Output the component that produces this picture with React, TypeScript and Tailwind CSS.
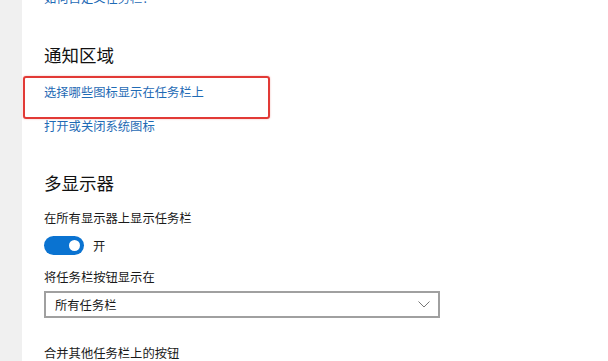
import React from "react";

export default function App() {
  return (
    <div
      className="relative flex h-[361px] w-[608px] overflow-hidden bg-white text-black"
      style={{ fontFamily: '"Noto Sans CJK SC", "Noto Sans", sans-serif' }}
    >
      <div className="h-full w-[22px] shrink-0 bg-[#f0f0f0]" />
      <div className="flex flex-col pl-[22px]">
        <div className="mt-[-10px] h-[16px] text-[12.3px] leading-[16px] text-[#1f6bb5]">如何自定义任务栏?</div>
        <div className="mt-[37px] h-[24px] text-[17.5px] leading-[24px] text-[#111]">通知区域</div>
        <div className="mt-[17px] h-[16px] text-[12.3px] leading-[16px] text-[#1f6bb5]">选择哪些图标显示在任务栏上</div>
        <div className="mt-[18px] h-[16px] text-[12.3px] leading-[16px] text-[#1f6bb5]">打开或关闭系统图标</div>
        <div className="mt-[37px] h-[24px] text-[17.5px] leading-[24px] text-[#111]">多显示器</div>
        <div className="mt-[15px] h-[16px] text-[12.3px] leading-[16px] text-[#1a1a1a]">在所有显示器上显示任务栏</div>
        <div className="mt-[10px] flex h-[19px] items-center gap-[9px]">
          <div className="flex h-[19px] w-[40px] items-center justify-end rounded-full bg-[#0a73d1] pr-[4px]">
            <div className="h-[11px] w-[11px] rounded-full bg-white" />
          </div>
          <span className="text-[12.3px] leading-[16px] text-[#1a1a1a]">开</span>
        </div>
        <div className="mt-[14px] h-[16px] text-[12.3px] leading-[16px] text-[#1a1a1a]">将任务栏按钮显示在</div>
        <div className="mt-[6px] flex h-[28px] w-[396px] items-center justify-between border-2 border-[#a0a0a0] pl-[9px] pr-[8px]">
          <span className="text-[12.3px] leading-[16px] text-[#1a1a1a]">所有任务栏</span>
          <svg width="12" height="7" viewBox="0 0 12 7" fill="none">
            <path d="M0.5 0.5 L6 6 L11.5 0.5" stroke="#777" strokeWidth="1" />
          </svg>
        </div>
        <div className="mt-[27px] h-[16px] text-[12.3px] leading-[16px] text-[#1a1a1a]">合并其他任务栏上的按钮</div>
      </div>
      <div className="absolute left-[23px] top-[76px] h-[43px] w-[247px] rounded-[3px] border-2 border-[#e23a36] shadow-[0_0_2px_rgba(226,58,54,0.4)]" />
    </div>
  );
}
